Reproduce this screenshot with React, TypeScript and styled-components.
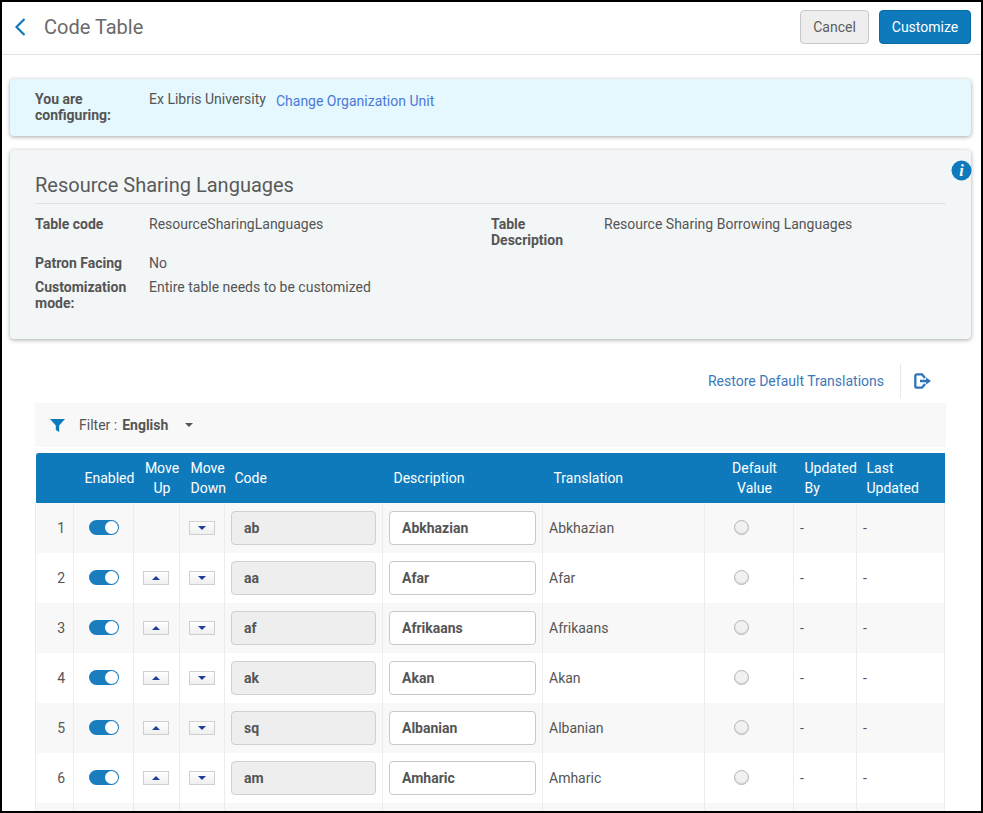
import styled, { createGlobalStyle } from "styled-components";

const languages = [
  { code: "ab", description: "Abkhazian" },
  { code: "aa", description: "Afar" },
  { code: "af", description: "Afrikaans" },
  { code: "ak", description: "Akan" },
  { code: "sq", description: "Albanian" },
  { code: "am", description: "Amharic" },
];

const App = () => {
  return (
    <>
      <GlobalStyle />
      <Frame>
        <Header>
          <HeaderLeft>
            <BackIcon width="14" height="20" viewBox="0 0 14 20">
              <path d="M11.5 2 L3.5 10 L11.5 18" fill="none" stroke="#0f7abb" strokeWidth="2.2" />
            </BackIcon>
            <PageTitle>Code Table</PageTitle>
          </HeaderLeft>
          <HeaderActions>
            <CancelButton>Cancel</CancelButton>
            <PrimaryButton>Customize</PrimaryButton>
          </HeaderActions>
        </Header>

        <Content>
          <ConfigPanel>
            <ConfigLabel>You are configuring:</ConfigLabel>
            <ConfigValue>Ex Libris University</ConfigValue>
            <ConfigLink>Change Organization Unit</ConfigLink>
          </ConfigPanel>

          <InfoCard>
            <InfoBadge width="21" height="21" viewBox="0 0 21 21">
              <circle cx="10.5" cy="10.5" r="10" fill="#0f7abb" />
              <text x="10.5" y="16" textAnchor="middle" fontFamily="'Liberation Serif', serif" fontStyle="italic" fontWeight="700" fontSize="16" fill="#fff">i</text>
            </InfoBadge>
            <CardTitle>Resource Sharing Languages</CardTitle>
            <DetailGrid>
              <DetailColumn>
                <DetailRow $gap={23}>
                  <DetailLabel>Table code</DetailLabel>
                  <span>ResourceSharingLanguages</span>
                </DetailRow>
                <DetailRow $gap={8}>
                  <DetailLabel>Patron Facing</DetailLabel>
                  <span>No</span>
                </DetailRow>
                <DetailRow $gap={0}>
                  <DetailLabel>Customization mode:</DetailLabel>
                  <span>Entire table needs to be customized</span>
                </DetailRow>
              </DetailColumn>
              <DetailColumn>
                <DetailRow $gap={0}>
                  <DescriptionLabel>Table Description</DescriptionLabel>
                  <span>Resource Sharing Borrowing Languages</span>
                </DetailRow>
              </DetailColumn>
            </DetailGrid>
          </InfoCard>

          <TableArea>
            <TableActions>
              <RestoreLink>Restore Default Translations</RestoreLink>
              <ActionDivider />
              <ExportIcon width="18" height="16" viewBox="0 0 18 16">
                <path d="M11 5 L8 1.3 H3 A1.7 1.7 0 0 0 1.3 3 V13 A1.7 1.7 0 0 0 3 14.7 H8 L11 11" fill="none" stroke="#2f74b8" strokeWidth="2.3" />
                <path d="M6 6.7 H12 V4.4 L17 8 L12 11.6 V9.3 H6 Z" fill="#2f74b8" />
              </ExportIcon>
            </TableActions>

            <FilterBar>
              <FilterIcon width="15" height="13" viewBox="0 0 15 13">
                <path d="M0 0 H15 L9.2 6.5 V13 L5.8 11 V6.5 Z" fill="#0f7abb" />
              </FilterIcon>
              <FilterLabel>Filter :</FilterLabel>
              <FilterValue>English</FilterValue>
              <Caret />
            </FilterBar>

            <CodeTable>
              <colgroup>
                <Col $width={38} />
                <Col $width={60} />
                <Col $width={46} />
                <Col $width={45} />
                <Col $width={158} />
                <Col $width={160} />
                <Col $width={162} />
                <Col $width={89} />
                <Col $width={63} />
                <Col $width={88} />
              </colgroup>
              <thead>
                <tr>
                  <HeadCell />
                  <HeadCell $center>Enabled</HeadCell>
                  <HeadCell $center>Move Up</HeadCell>
                  <HeadCell $center>Move Down</HeadCell>
                  <HeadCell>Code</HeadCell>
                  <HeadCell $inset={11}>Description</HeadCell>
                  <HeadCell $inset={11}>Translation</HeadCell>
                  <HeadCell $center>Default Value</HeadCell>
                  <HeadCell $inset={11}>Updated By</HeadCell>
                  <HeadCell>Last Updated</HeadCell>
                </tr>
              </thead>
              <tbody>
                {languages.map((lang, index) => (
                  <Row key={lang.code}>
                    <IndexCell>{index + 1}</IndexCell>
                    <Cell $center>
                      <Toggle />
                    </Cell>
                    <MoveUpCell $center>
                      {index > 0 && (
                        <MoveButton>
                          <UpArrow />
                        </MoveButton>
                      )}
                    </MoveUpCell>
                    <Cell $center>
                      <MoveButton>
                        <DownArrow />
                      </MoveButton>
                    </Cell>
                    <Cell>
                      <CodeField>{lang.code}</CodeField>
                    </Cell>
                    <Cell>
                      <DescriptionField>{lang.description}</DescriptionField>
                    </Cell>
                    <Cell>{lang.description}</Cell>
                    <RadioCell $center>
                      <Radio />
                    </RadioCell>
                    <Cell>-</Cell>
                    <Cell>-</Cell>
                  </Row>
                ))}
                {/* next row starts right at the bottom of the window */}
                <Row>
                  {Array.from({ length: 10 }, (_, i) => (
                    <Cell key={i} />
                  ))}
                </Row>
              </tbody>
            </CodeTable>
          </TableArea>
        </Content>
      </Frame>
    </>
  );
};

export default App;

const GlobalStyle = createGlobalStyle`
  html, body {
    margin: 0;
    padding: 0;
    background: #fff;
    overflow: hidden;
  }
  body {
    font-family: "Roboto", "Liberation Sans", sans-serif;
    font-size: 14px;
    color: #555;
  }
`;

const Frame = styled.div`
  box-sizing: border-box;
  width: 983px;
  height: 813px;
  border: 2px solid #000;
  overflow: hidden;
  background: #fff;
`;

const Header = styled.header`
  box-sizing: border-box;
  height: 53px;
  display: flex;
  align-items: center;
  justify-content: space-between;
  padding: 0 10px 2px 11px;
  border-bottom: 1px solid #e2e2e2;
`;

const HeaderLeft = styled.div`
  display: flex;
  align-items: center;
  gap: 17px;
`;

const BackIcon = styled.svg`
  display: block;
`;

const PageTitle = styled.h1`
  margin: 0;
  font-size: 20px;
  font-weight: 400;
  color: #6a6a6a;
`;

const HeaderActions = styled.div`
  display: flex;
  gap: 10px;
`;

const CancelButton = styled.button`
  box-sizing: border-box;
  width: 69px;
  height: 34px;
  padding: 0;
  border: 1px solid #c8c8c8;
  border-radius: 4px;
  background: #eeeeee;
  color: #5c5c5c;
  font: 400 14px "Roboto", sans-serif;
`;

const PrimaryButton = styled.button`
  box-sizing: border-box;
  width: 92px;
  height: 34px;
  padding: 0;
  border: 1px solid #0b6aa5;
  border-radius: 4px;
  background: #0f7abb;
  color: #fff;
  font: 400 14px "Roboto", sans-serif;
`;

const Content = styled.main`
  padding: 24px 10px 0 8px;
`;

const ConfigPanel = styled.section`
  box-sizing: border-box;
  height: 57px;
  display: flex;
  align-items: flex-start;
  padding: 12px 25px 0;
  background: #e4f8fe;
  border-radius: 4px;
  box-shadow: 0 1px 4px rgba(0, 0, 0, 0.35);
  line-height: 16px;
`;

const ConfigLabel = styled.div`
  width: 114px;
  padding-right: 30px;
  box-sizing: border-box;
  font-weight: 700;
`;

const ConfigValue = styled.div`
  margin-right: 10px;
`;

const ConfigLink = styled.a`
  margin-top: 2px;
  color: #4a78d8;
`;

const InfoCard = styled.section`
  position: relative;
  box-sizing: border-box;
  height: 189px;
  margin-top: 14px;
  padding: 24px 25px 0;
  background: #f3f6f7;
  border-radius: 4px;
  box-shadow: 0 1px 4px rgba(0, 0, 0, 0.35);
`;

const InfoBadge = styled.svg`
  position: absolute;
  top: 9.5px;
  right: -0.5px;
`;

const CardTitle = styled.h2`
  margin: 0;
  padding-bottom: 6px;
  font-size: 20px;
  line-height: 23px;
  font-weight: 400;
  color: #5a5a5a;
  border-bottom: 1px solid #dfe2e3;
`;

const DetailGrid = styled.div`
  display: grid;
  grid-template-columns: 456px 1fr;
  padding-top: 12px;
  line-height: 16px;
`;

const DetailColumn = styled.div`
  display: flex;
  flex-direction: column;
`;

const DetailRow = styled.div<{ $gap: number }>`
  display: flex;
  margin-bottom: ${(p) => p.$gap}px;
`;

const DetailLabel = styled.div`
  box-sizing: border-box;
  flex: 0 0 114px;
  padding-right: 14px;
  font-weight: 700;
`;

const DescriptionLabel = styled(DetailLabel)`
  flex-basis: 113px;
`;

const TableArea = styled.section`
  padding: 25px 26px 0 26px;
`;

const TableActions = styled.div`
  display: flex;
  align-items: center;
  justify-content: flex-end;
  height: 34px;
  padding-right: 13px;
`;

const RestoreLink = styled.a`
  color: #3b79b8;
`;

const ActionDivider = styled.div`
  width: 1px;
  height: 34px;
  margin: 0 13px 0 16px;
  background: #e8e8e8;
`;

const ExportIcon = styled.svg`
  display: block;
`;

const FilterBar = styled.div`
  box-sizing: border-box;
  display: flex;
  align-items: center;
  height: 44px;
  margin: 5px 0 6px -1px;
  padding-left: 15px;
  width: 911px;
  background: #f8f8f8;
`;

const FilterIcon = styled.svg`
  display: block;
  margin-right: 14px;
`;

const FilterLabel = styled.span`
  margin-right: 5px;
`;

const FilterValue = styled.strong`
  font-weight: 700;
  margin-right: 17px;
`;

const Caret = styled.span`
  width: 0;
  height: 0;
  border-left: 4px solid transparent;
  border-right: 4px solid transparent;
  border-top: 4px solid #555;
`;

const CodeTable = styled.table`
  width: 909px;
  margin-left: -1px;
  table-layout: fixed;
  border-collapse: collapse;
`;

const Col = styled.col<{ $width: number }>`
  width: ${(p) => p.$width}px;
`;

const HeadCell = styled.th<{ $center?: boolean; $inset?: number }>`
  box-sizing: border-box;
  height: 50px;
  padding: 0 ${(p) => (p.$center ? 0 : 10)}px 0 ${(p) => (p.$center ? 11 : p.$inset ?? 10)}px;
  background: #0f7abb;
  color: #fff;
  font-weight: 400;
  font-size: 14px;
  line-height: 20px;
  text-align: ${(p) => (p.$center ? "center" : "left")};

  &:first-child {
    border-top-left-radius: 3px;
  }
`;

const Row = styled.tr`
  background: #fff;

  &:nth-child(odd) {
    background: #f8f8f8;
  }
`;

const Cell = styled.td<{ $center?: boolean }>`
  box-sizing: border-box;
  height: 50px;
  padding: 0 ${(p) => (p.$center ? 0 : 6)}px;
  text-align: ${(p) => (p.$center ? "center" : "left")};
  border-left: 1px solid #ececec;
  border-right: 1px solid #ececec;
  vertical-align: middle;
`;

const IndexCell = styled(Cell)`
  padding: 0 8px 0 0;
  text-align: right;
`;

const MoveUpCell = styled(Cell)`
  padding-right: 2px;
`;

const RadioCell = styled(Cell)`
  padding-right: 15px;
`;

const Toggle = styled.span`
  position: relative;
  display: block;
  width: 30px;
  height: 15px;
  margin: 0 auto 1px;
  border-radius: 8px;
  background: #1a7dbd;

  &::after {
    content: "";
    position: absolute;
    top: 1px;
    right: 1px;
    width: 13px;
    height: 13px;
    border-radius: 50%;
    background: #fff;
  }
`;

const MoveButton = styled.span`
  box-sizing: border-box;
  display: flex;
  align-items: center;
  justify-content: center;
  width: 26px;
  height: 14px;
  margin: 0 auto;
  border: 1px solid #cfcfcf;
  background: linear-gradient(#fff, #efefef);
`;

const UpArrow = styled.span`
  width: 0;
  height: 0;
  border-left: 4px solid transparent;
  border-right: 4px solid transparent;
  border-bottom: 4px solid #1f3f9a;
`;

const DownArrow = styled.span`
  width: 0;
  height: 0;
  border-left: 4px solid transparent;
  border-right: 4px solid transparent;
  border-top: 4px solid #1f3f9a;
`;

const CodeField = styled.div`
  box-sizing: border-box;
  display: flex;
  align-items: center;
  width: 145px;
  height: 34px;
  padding-left: 12px;
  border: 1px solid #d0d0d0;
  border-radius: 4px;
  background: #eeeeee;
  font-weight: 700;
`;

const DescriptionField = styled.div`
  box-sizing: border-box;
  display: flex;
  align-items: center;
  width: 147px;
  height: 34px;
  padding-left: 12px;
  border: 1px solid #c9c9c9;
  border-radius: 4px;
  background: #fff;
  font-weight: 700;
`;

const Radio = styled.span`
  box-sizing: border-box;
  display: block;
  width: 15px;
  height: 15px;
  margin: 0 auto 1px;
  border: 1px solid #b5b5b5;
  border-radius: 50%;
  background: #f1f1f1;
  box-shadow: inset 0 -1px 1px rgba(0, 0, 0, 0.12);
`;
